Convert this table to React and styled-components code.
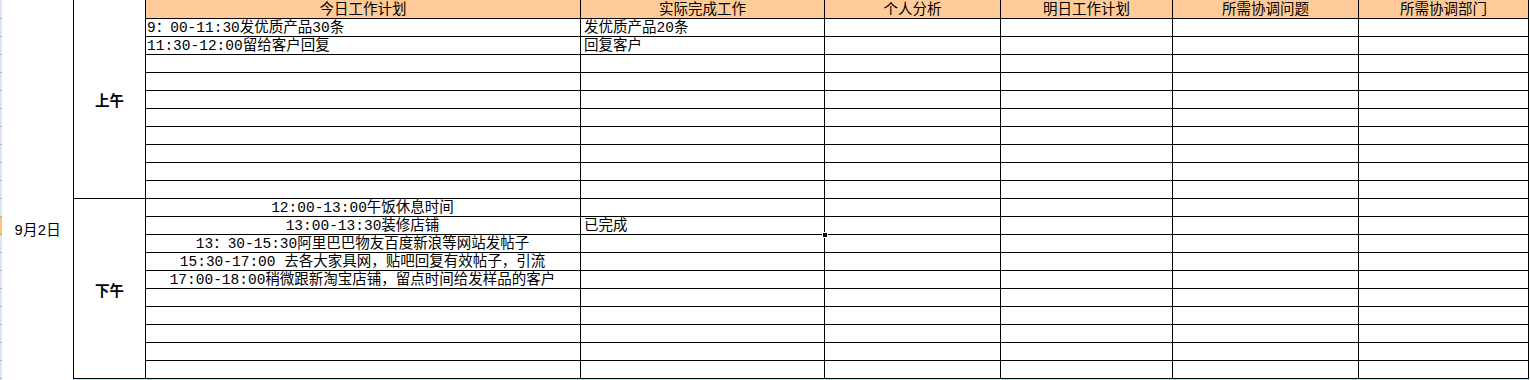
import React from 'react';
import styled, { createGlobalStyle } from 'styled-components';

const GlobalStyle = createGlobalStyle`
    html, body {
        margin: 0;
        padding: 0;
        background: #fff;
    }
    body {
        font-family: "Liberation Mono", "Noto Sans CJK SC", monospace;
        font-size: 14.5px;
        color: #000;
    }
`;

const COLUMNS = ['今日工作计划', '实际完成工作', '个人分析', '明日工作计划', '所需协调问题', '所需协调部门'];
const WIDTHS = [435, 244, 176, 172, 186, 170];

const pad = (rows, n) => [...rows, ...Array.from({ length: n - rows.length }, () => ({}))];

const MORNING = pad(
    [
        { plan: '9：00-11:30发优质产品30条', done: '发优质产品20条' },
        { plan: '11:30-12:00留给客户回复', done: '回复客户' },
    ],
    10,
);

const AFTERNOON = pad(
    [
        { plan: '12:00-13:00午饭休息时间', center: true },
        { plan: '13:00-13:30装修店铺', center: true, done: '已完成', selected: true },
        { plan: '13：30-15:30阿里巴巴物友百度新浪等网站发帖子', center: true },
        { plan: '15:30-17:00 去各大家具网，贴吧回复有效帖子，引流', center: true },
        { plan: '17:00-18:00稍微跟新淘宝店铺，留点时间给发样品的客户', center: true },
    ],
    10,
);

const Page = styled.div`
    display: flex;
    width: 1530px;
    height: 380px;
    overflow: hidden;
    background: #fff;
`;

const RowEdge = styled.div`
    display: flex;
    flex-direction: column;
    width: 2px;
    flex: none;
`;

const EdgeTick = styled.div`
    height: ${(p) => (p.first ? 19 : 18)}px;
    box-sizing: border-box;
    flex: none;
    background: ${(p) => (p.active ? '#f7c47e' : '#dbe5f3')};
    border-bottom: 1px solid ${(p) => (p.active ? '#e59a3a' : '#9eb6ce')};
`;

const DateColumn = styled.div`
    width: 71px;
    flex: none;
    display: flex;
    align-items: flex-end;
    justify-content: center;
    padding-bottom: 140px;
    box-sizing: border-box;
    height: 380px;
    line-height: 17px;
    white-space: nowrap;
`;

const Sheet = styled.div`
    display: grid;
    grid-template-columns: 72px ${WIDTHS.map((w) => `${w}px`).join(' ')};
    grid-template-rows: 19px repeat(20, 18px);
    border-left: 1px solid #000;
    box-shadow: 0 1px 0 #b3e4ea;
    align-self: flex-start;
    flex: none;
`;

const Cell = styled.div`
    position: relative;
    box-sizing: border-box;
    border-right: 1px solid #000;
    border-bottom: 1px solid #000;
    padding: 1px 1px 0;
    line-height: 17px;
    white-space: nowrap;
    overflow: visible;
    text-align: ${(p) => (p.center ? 'center' : 'left')};
    background: #fff;
`;

const HeaderCell = styled(Cell)`
    background: #ffcc99;
    text-align: center;
    padding-top: 1px;
    line-height: 18px;
`;

const PeriodCell = styled(Cell)`
    grid-column: 1;
    grid-row: ${(p) => p.start} / span ${(p) => p.span};
    display: flex;
    align-items: center;
    justify-content: center;
    font-family: "Noto Sans CJK SC", sans-serif;
    font-weight: 700;
    font-size: 14.5px;
`;

const DoneCell = styled(Cell)`
    padding-left: 3px;
    z-index: ${(p) => (p.selected ? 2 : 'auto')};

    ${(p) =>
        p.selected &&
        `
        &::after {
            content: '';
            position: absolute;
            top: -1px;
            left: -1px;
            right: -1px;
            bottom: -1px;
            pointer-events: none;
            border: 1px solid #000;
        }
    `}
`;

const FillHandle = styled.span`
    position: absolute;
    right: -4px;
    bottom: -4px;
    width: 4px;
    height: 4px;
    background: #000;
    border: 1px solid #fff;
    z-index: 3;
`;

const PlanCell = styled(Cell)`
    padding-left: ${(p) => (p.center ? 0 : 1)}px;
`;

function DataRow({ row }) {
    return (
        <>
            <PlanCell center={row.center}>{row.plan}</PlanCell>
            <DoneCell selected={row.selected}>
                {row.done}
                {row.selected && <FillHandle />}
            </DoneCell>
            <Cell />
            <Cell />
            <Cell />
            <Cell />
        </>
    );
}

export default function App() {
    const activeTick = 13;
    return (
        <Page>
            <GlobalStyle />
            <RowEdge>
                {Array.from({ length: 22 }, (_, i) => (
                    <EdgeTick key={i} first={i === 0} active={i === activeTick - 1} />
                ))}
            </RowEdge>
            <DateColumn>9月2日</DateColumn>
            <Sheet>
                <PeriodCell start={1} span={11}>上午</PeriodCell>
                <PeriodCell start={12} span={10}>下午</PeriodCell>
                {COLUMNS.map((c) => (
                    <HeaderCell key={c}>{c}</HeaderCell>
                ))}
                {MORNING.map((row, i) => (
                    <DataRow key={`m${i}`} row={row} />
                ))}
                {AFTERNOON.map((row, i) => (
                    <DataRow key={`a${i}`} row={row} />
                ))}
            </Sheet>
        </Page>
    );
}
